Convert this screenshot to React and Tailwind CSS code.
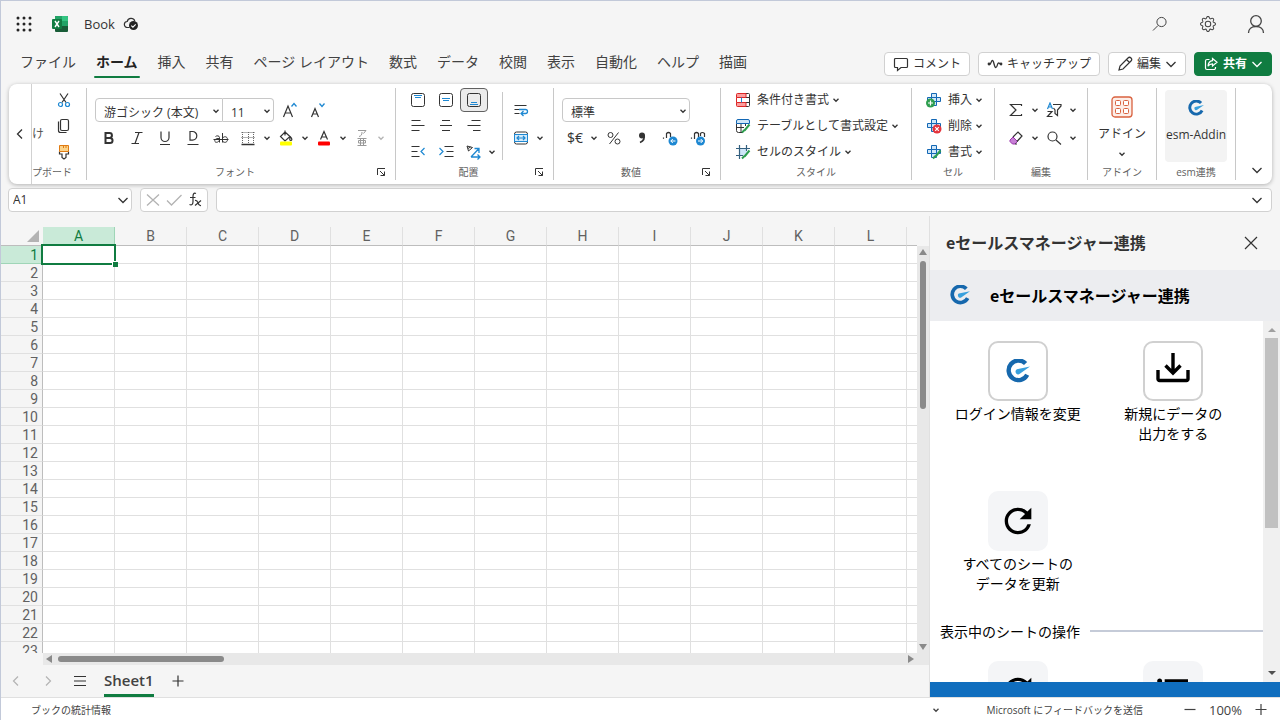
import { useState } from "react";
import { BsGear } from "react-icons/bs";
import { MdFormatListBulleted, MdRefresh } from "react-icons/md";

const TABS = [
  "ファイル",
  "ホーム",
  "挿入",
  "共有",
  "ページ レイアウト",
  "数式",
  "データ",
  "校閲",
  "表示",
  "自動化",
  "ヘルプ",
  "描画",
];
const COLUMNS = [..."ABCDEFGHIJKL", ""];
const ROWS = Array.from({ length: 23 }, (_, i) => i + 1);

function Icon({ size = 16, className = "", children }) {
  return (
    <svg
      width={size}
      height={size}
      viewBox={`0 0 ${size} ${size}`}
      fill="none"
      stroke="currentColor"
      strokeWidth="1"
      className={`shrink-0 ${className}`}
      aria-hidden="true"
    >
      {children}
    </svg>
  );
}

const Chevron = ({ className = "" }) => (
  <Icon size={8} className={className}>
    <path d="M1.5 2.8L4 5.3l2.5-2.5" strokeWidth="1.3" />
  </Icon>
);

const BigChevron = ({ className = "" }) => (
  <Icon size={12} className={className}>
    <path d="M1.5 4L6 8.5 10.5 4" strokeWidth="1.3" />
  </Icon>
);

function EsmLogo({ size = 24 }) {
  return (
    <svg width={size} height={size} viewBox="0 0 24 24" aria-hidden="true">
      <path
        d="M19.6 4.6A9.8 9.8 0 1 0 21.2 15.8"
        fill="none"
        stroke="#1668ad"
        strokeWidth="4.4"
      />
      <path
        d="M24 7.6L12 10a2.6 2.6 0 0 0-2.4 3.2 2.6 2.6 0 0 0 4.2 1.6z"
        fill="#38a0dd"
      />
    </svg>
  );
}

function ExcelLogo() {
  return (
    <svg width="16" height="16" viewBox="0 0 16 16" aria-hidden="true">
      <rect x="3" width="13" height="16" rx="1" fill="#185c37" />
      <path d="M3 1a1 1 0 0 1 1-1h6v5H3z" fill="#21a366" />
      <path d="M10 0h5a1 1 0 0 1 1 1v4h-6z" fill="#33c481" />
      <path d="M3 5h7v5H3z" fill="#107c41" />
      <path d="M10 5h6v5h-6z" fill="#21a366" />
      <rect y="3" width="10" height="10" rx="1" fill="#107c41" />
      <path d="M3 5l4 6M7 5l-4 6" stroke="#fff" strokeWidth="1.4" />
    </svg>
  );
}

function Tool({ label, active, children }) {
  return (
    <button
      aria-label={label}
      className={`flex h-6 w-7 items-center justify-center rounded ${active ? "border border-[#616161] bg-[#ebebeb]" : ""}`}
    >
      {children}
    </button>
  );
}

function SplitTool({ label, muted, children }) {
  return (
    <button
      aria-label={label}
      className={`flex h-6 items-center ${muted ? "text-[#b3b3b3]" : ""}`}
    >
      <span className="flex w-[26px] justify-center">{children}</span>
      <span className="flex w-3 justify-center">
        <Chevron />
      </span>
    </button>
  );
}

function TextTool({ label, children }) {
  return (
    <button className="flex h-6 items-center gap-1.5 whitespace-nowrap text-xs">
      {children}
      <span className="flex items-center gap-[3px]">
        {label}
        <Chevron />
      </span>
    </button>
  );
}

function Group({ label, launcher, width, children }) {
  return (
    <section
      className={`flex shrink-0 flex-col border-r border-[#c8c8c8] ${width}`}
    >
      <div className="flex-1">{children}</div>
      <div className="flex h-4 items-center text-[10px] leading-4 text-[#616161]">
        <span
          className={`flex-1 whitespace-nowrap text-center ${launcher ? "pl-2" : ""}`}
        >
          {label}
        </span>
        {launcher && (
          <button aria-label={`${label}の設定`} className="mr-2 text-[#333]">
            <Icon size={12}>
              <path d="M2.5 9V2.5H10M5 5l4.5 4.5M9.5 5.5v4h-4" />
            </Icon>
          </button>
        )}
      </div>
    </section>
  );
}

function Select({ label, value, className }) {
  return (
    <div className={`relative h-6 border border-[#c8c8c8] ${className}`}>
      <select
        aria-label={label}
        className="h-full w-full appearance-none pl-2 text-xs outline-none"
      >
        <option>{value}</option>
      </select>
      <Chevron className="pointer-events-none absolute right-0.5 top-2" />
    </div>
  );
}

function CellGlyph() {
  return (
    <path
      d="M5.5 1.5h5v4h4v4h-4v4h-5v-4h-4v-4h4zM5.5 5.5h5v4h-5z"
      stroke="#1267b4"
      fill="#cfe6f8"
    />
  );
}

function TopBar() {
  return (
    <header className="flex h-[47px] shrink-0 items-center pb-0.5 pl-3.5">
      <button aria-label="アプリ起動ツール" className="mr-[19px]">
        <Icon size={18}>
          {[3, 9, 15].map((y) =>
            [3, 9, 15].map((x) => (
              <circle
                key={`${x}-${y}`}
                cx={x}
                cy={y}
                r="1.5"
                fill="#242424"
                stroke="none"
              />
            )),
          )}
        </Icon>
      </button>
      <ExcelLogo />
      <span className="ml-4 text-[13px] leading-5">Book</span>
      <Icon className="ml-2">
        <path d="M6.5 11.5h-2a3 3 0 0 1-.3-6 4 4 0 0 1 7.6-.6" strokeWidth="1.2" />
        <circle cx="10.5" cy="9.5" r="4.5" fill="#242424" stroke="none" />
        <path d="M8.3 9.6l1.6 1.6 2.8-2.9" stroke="#fff" strokeWidth="1.1" />
      </Icon>
      <div className="ml-auto flex items-center text-[#444]">
        <button aria-label="検索" className="flex w-12 justify-center">
          <Icon>
            <circle cx="9.5" cy="6" r="4.6" />
            <path d="M6 9.5L1 14.5" />
          </Icon>
        </button>
        <button aria-label="設定" className="flex w-12 justify-center">
          <BsGear size={16} />
        </button>
        <button aria-label="アカウント" className="flex w-12 justify-center">
          <Icon size={18}>
            <circle cx="9" cy="6" r="5.3" strokeWidth="1.3" />
            <path d="M1.5 18c0-4 3-6.5 7.5-6.5s7.5 2.5 7.5 6.5" strokeWidth="1.3" />
          </Icon>
        </button>
      </div>
    </header>
  );
}

function TabRow() {
  const [tab, setTab] = useState("ホーム");
  const action =
    "flex h-6 items-center rounded border border-[#d1d1d1] bg-white px-2 gap-1 whitespace-nowrap";
  return (
    <div className="flex h-9 shrink-0 items-center justify-between pb-1 pl-[19px] pr-2">
      <nav className="flex gap-5">
        {TABS.map((name) => (
          <button
            key={name}
            onClick={() => setTab(name)}
            className={`relative h-7 whitespace-nowrap pb-1 text-sm leading-5 ${name === tab ? "font-bold text-[#242424]" : "text-[#424242]"}`}
          >
            {name}
            {name === tab && (
              <span className="absolute -inset-x-0.5 bottom-0 h-0.5 rounded bg-[#107c41]" />
            )}
          </button>
        ))}
      </nav>
      <div className="flex gap-2 text-xs">
        <button className={action}>
          <Icon>
            <path
              d="M2.5 2.5h11a1 1 0 0 1 1 1v7a1 1 0 0 1-1 1H8l-3.5 3v-3h-2a1 1 0 0 1-1-1v-7a1 1 0 0 1 1-1z"
              strokeWidth="1.2"
            />
          </Icon>
          コメント
        </button>
        <button className={action}>
          <Icon>
            <path
              d="M2 8.5c2 .5 2-4 3.500-4S7 11.500 8.800 11.500 10 7 11.500 7s1 1.500 3 1.500"
              strokeWidth="1.3"
            />
            <circle cx="2" cy="8" r="1.4" fill="currentColor" stroke="none" />
            <circle cx="14" cy="8" r="1.4" fill="currentColor" stroke="none" />
          </Icon>
          キャッチアップ
        </button>
        <button className={action}>
          <Icon>
            <path
              d="M2 14l1-4 8-8a1.8 1.8 0 0 1 3 3l-8 8zM9.500 3.500l3 3"
              strokeWidth="1.2"
            />
          </Icon>
          編集
          <BigChevron />
        </button>
        <button className="flex h-6 items-center gap-1 whitespace-nowrap rounded border border-[#107c41] bg-[#107c41] px-2 font-bold text-white">
          <Icon>
            <path
              d="M6.5 3.500H4A1.500 1.500 0 0 0 2.500 5v7A1.500 1.500 0 0 0 4 13.500h7a1.500 1.500 0 0 0 1.500-1.500v-1"
              strokeWidth="1.2"
            />
            <path
              d="M9.500 2.500L14 6.300 9.500 10V7.800C7.500 7.800 6 8.600 5 10.200 5.300 7 7 5 9.500 4.700z"
              strokeWidth="1.2"
            />
          </Icon>
          共有
          <BigChevron />
        </button>
      </div>
    </div>
  );
}

function FontGroup() {
  return (
    <Group label="フォント" launcher width="w-[309px]">
      <div className="flex flex-col gap-1 px-2 pt-2.5">
        <div className="flex">
          <Select
            label="フォント名"
            value="游ゴシック (本文)"
            className="w-32 rounded-l"
          />
          <Select
            label="フォント サイズ"
            value="11"
            className="mr-0.5 w-[51px] rounded-r border-l-0"
          />
          <Tool label="フォント サイズの拡大">
            <Icon>
              <path d="M1.5 15L6 4l4.5 11M3 11h6" strokeWidth="1.2" />
              <path d="M9.5 4.5l2.5-3 2.5 3" stroke="#1e88d2" strokeWidth="1.3" />
            </Icon>
          </Tool>
          <Tool label="フォント サイズの縮小">
            <Icon>
              <path d="M1.5 15L5 6.5 8.5 15M2.8 12h4.4" strokeWidth="1.2" />
              <path d="M9.5 1.5l2.5 3 2.5-3" stroke="#1e88d2" strokeWidth="1.3" />
            </Icon>
          </Tool>
        </div>
        <div className="flex">
          <Tool label="太字">
            <Icon>
              <path
                d="M4.5 3h4a2.4 2.4 0 0 1 0 4.9h-4zM4.5 7.9H9a2.5 2.5 0 0 1 0 5.1H4.5z"
                strokeWidth="2"
              />
            </Icon>
          </Tool>
          <Tool label="斜体">
            <Icon>
              <path d="M6 2.5h7.5M2.5 13.5H10M10 2.5l-4 11" strokeWidth="1.2" />
            </Icon>
          </Tool>
          <Tool label="下線">
            <Icon>
              <path d="M4 1.5v6a4 4 0 0 0 8 0v-6M3 14.5h10" strokeWidth="1.2" />
            </Icon>
          </Tool>
          <Tool label="二重下線">
            <Icon>
              <path d="M5 1.5h2.5a4.3 4.3 0 0 1 0 8.6H5z" strokeWidth="1.2" />
              <path d="M2.5 14.5h11" />
            </Icon>
          </Tool>
          <Tool label="取り消し線">
            <Icon>
              <path d="M2.5 6.5c1-1 4-1 4 1v5M6.5 8.5c-6-.5-5.5 4-3 3.800 1.500 0 3-1.500 3-2.500M9.500 3v9.500M9.500 8.500c1-2.500 5-2.500 5 1s-4 3.500-5 1.500M.5 9.500h15" />
            </Icon>
          </Tool>
          <SplitTool label="罫線">
            <Icon>
              <path
                d="M1.5 2.5h13M1.5 7.5h13M2.5 2v11M8.5 2v11M13.5 2v11"
                strokeDasharray="1 1"
                stroke="#666"
              />
              <path d="M1.5 14.5h13" strokeWidth="1.5" />
            </Icon>
          </SplitTool>
          <SplitTool label="塗りつぶしの色">
            <Icon>
              <path
                d="M7 2l5 4.5-5 4.5-4.5-4.5zM7 .5v5M12.5 7c2 2 1.5 3.5.3 3.5s-1.500-1.500-.3-3.500z"
                strokeWidth="1.2"
              />
              <rect x="2" y="11.5" width="12" height="4" rx="1" fill="#ff0" stroke="none" />
            </Icon>
          </SplitTool>
          <SplitTool label="フォントの色">
            <Icon>
              <path d="M4.5 9.5l3.5-8 3.5 8M5.700 7h4.600" strokeWidth="1.2" />
              <rect x="2" y="11.5" width="12" height="4" rx="1" fill="#f00" stroke="none" />
            </Icon>
          </SplitTool>
          <SplitTool label="ふりがな" muted>
            <Icon>
              <path
                d="M4 .5h8L9.500 3.500M8 2c0 3-1 4-3 4.500M3.500 8.500h9M4.500 10.500h7v2.500h-7zM6.500 8.500v6.500M9.500 8.500v6.500M3.500 15.500h9"
                stroke="#999"
              />
            </Icon>
          </SplitTool>
        </div>
      </div>
    </Group>
  );
}

function AlignGroup() {
  return (
    <Group label="配置" launcher width="w-[158px]">
      <div className="flex pl-2">
        <div className="flex w-[98px] flex-col gap-0.5">
          <div className="flex">
            <Tool label="上揃え">
              <Icon>
                <rect x="1.5" y="1.5" width="13" height="13" rx="2" />
                <path d="M4 3.5h8M5 5.5h6" stroke="#1e88d2" />
              </Icon>
            </Tool>
            <Tool label="上下中央揃え">
              <Icon>
                <rect x="1.5" y="1.5" width="13" height="13" rx="2" />
                <path d="M4 6.5h8M5 8.5h6" stroke="#1e88d2" />
              </Icon>
            </Tool>
            <Tool label="下揃え" active>
              <Icon>
                <rect x="1.5" y="1.5" width="13" height="13" rx="2" />
                <path d="M5 10.5h6M4 12.5h8" stroke="#1e88d2" />
              </Icon>
            </Tool>
          </div>
          <div className="flex">
            <Tool label="左揃え">
              <Icon>
                <path d="M1.5 2.5h9M1.5 7.5h13M1.5 12.5h8" strokeWidth="1.2" />
              </Icon>
            </Tool>
            <Tool label="中央揃え">
              <Icon>
                <path d="M4 2.5h8M2 7.5h12M4 12.5h8" strokeWidth="1.2" />
              </Icon>
            </Tool>
            <Tool label="右揃え">
              <Icon>
                <path d="M5.5 2.5h9M1.5 7.5h13M7 12.5h7.5" strokeWidth="1.2" />
              </Icon>
            </Tool>
          </div>
          <div className="flex">
            <Tool label="インデントを減らす">
              <Icon>
                <path d="M1.5 2.5h8M1.5 7.5h6M1.5 12.5h8" strokeWidth="1.2" />
                <path d="M14.5 4L11 7.5l3.5 3.5" stroke="#1e88d2" strokeWidth="1.2" />
              </Icon>
            </Tool>
            <Tool label="インデントを増やす">
              <Icon>
                <path d="M6.5 2.5h9M8.5 7.5h7M6.5 12.5h9" strokeWidth="1.2" />
                <path d="M1.5 4L5 7.5 1.5 11" stroke="#1e88d2" strokeWidth="1.2" />
              </Icon>
            </Tool>
            <SplitTool label="方向">
              <Icon>
                <path d="M2 2l5.5 1.500L3.500 7zM5.500 3L3 4.500" />
                <path
                  d="M6 13l8-8.500M9.500 4.500H14V9M6 13h9M12.500 10.500L15 13l-2.500 2.500"
                  stroke="#1e88d2"
                  strokeWidth="1.3"
                />
              </Icon>
            </SplitTool>
          </div>
        </div>
        <div className="mt-1 flex h-[68px] flex-col gap-1 border-l border-[#c8c8c8] pl-[5px] pt-1.5">
          <button
            aria-label="折り返して全体を表示"
            className="flex h-6 w-[26px] items-center justify-center"
          >
            <Icon>
              <path d="M1.5 3.5h12M1.5 11.5h5M1.5 7.5H6" strokeWidth="1.2" />
              <path
                d="M6 7.5h6.5a2 2 0 0 1 0 4H8.5M10.5 9L8 11.5l2.5 2.5"
                stroke="#1e88d2"
                strokeWidth="1.3"
              />
            </Icon>
          </button>
          <SplitTool label="セルを結合して中央揃え">
            <Icon>
              <rect x="1.5" y="2" width="13" height="12" rx="2" />
              <rect x="1.5" y="4.5" width="13" height="7" fill="#d5eaf9" stroke="#1e88d2" />
              <path
                d="M4 8h8M6 6L4 8l2 2M10 6l2 2-2 2"
                stroke="#1e88d2"
                strokeWidth="1.2"
              />
            </Icon>
          </SplitTool>
        </div>
      </div>
    </Group>
  );
}

function NumberGroup() {
  return (
    <Group label="数値" launcher width="w-[167px]">
      <div className="flex flex-col gap-1 px-2 pt-2.5">
        <Select label="表示形式" value="標準" className="w-32 rounded" />
        <div className="flex">
          <SplitTool label="通貨表示形式">
            <span className="text-sm">$€</span>
          </SplitTool>
          <Tool label="パーセント スタイル">
            <Icon>
              <circle cx="4.5" cy="5" r="2.5" />
              <circle cx="11.5" cy="11.5" r="2.5" />
              <path d="M12.5 2.5l-9 11.5" />
            </Icon>
          </Tool>
          <Tool label="桁区切りスタイル">
            <Icon>
              <circle cx="8" cy="5.5" r="3" fill="currentColor" stroke="none" />
              <path d="M10 5c.8 3-.5 6-4 7.5" strokeWidth="1.7" />
            </Icon>
          </Tool>
          <Tool label="小数点以下の表示桁数を増やす">
            <Icon>
              <path d="M1.5 7.500v1.200M4.500 8V3.500q2-2 4 0V7" strokeWidth="1.2" />
              <circle cx="11" cy="11" r="4.5" fill="#1e88d2" stroke="none" />
              <path d="M13.5 11H8.8M10.8 9l-2 2 2 2" stroke="#fff" />
            </Icon>
          </Tool>
          <Tool label="小数点以下の表示桁数を減らす">
            <Icon>
              <path
                d="M1.5 7.500v1.200M4.500 9V3.500q2-2 4 0V7M10.500 6V3.500q1.700-2 4 0V7"
                strokeWidth="1.2"
              />
              <circle cx="10.5" cy="11" r="4.5" fill="#1e88d2" stroke="none" />
              <path d="M8 11h4.700M10.700 9l2 2-2 2" stroke="#fff" />
            </Icon>
          </Tool>
        </div>
      </div>
    </Group>
  );
}

function StyleGroup() {
  return (
    <Group label="スタイル" width="w-[191px]">
      <div className="flex flex-col items-start gap-0.5 pl-3.5">
        <TextTool label="条件付き書式">
          <Icon>
            <path d="M6 5.5h8.5v5H6M11 1.500h2.500a1 1 0 0 1 1 1v11a1 1 0 0 1-1 1H11" />
            <path
              d="M2.5 1.5H11v4H1.5v-3a1 1 0 0 1 1-1zM1.5 10.5H11v4H2.5a1 1 0 0 1-1-1z"
              fill="#fb9c9c"
              stroke="#dc2626"
            />
            <path d="M1.5 5.5v5" stroke="#dc2626" />
            <path d="M6.5 5.5v5" stroke="#1e88d2" />
          </Icon>
        </TextTool>
        <TextTool label="テーブルとして書式設定">
          <Icon>
            <path d="M1.5 5.500v7a2 2 0 0 0 2 2h2M1.500 9.500H9M6 5.500v9M10.500 5.500V8M5 14.500h3" />
            <path
              d="M3 1.500h10A1.500 1.500 0 0 1 14.500 3v2.500h-13V3A1.500 1.500 0 0 1 3 1.500z"
              fill="#cfe6f8"
              stroke="#1267b4"
            />
            <path d="M14.500 6.500l-5 6M9.500 12L7 14.500" stroke="#2e9e4f" strokeWidth="2" />
          </Icon>
        </TextTool>
        <TextTool label="セルのスタイル">
          <Icon>
            <path d="M5 4.5h7v7H5z" fill="#cfe6f8" stroke="none" />
            <path
              d="M1 4.5h14M1 11.5h7M4.5 1v14M11.5 1v6"
              stroke="#34607f"
              strokeWidth="1.2"
            />
            <path d="M14.5 6.5l-5 6M9.5 12L7 14.5" stroke="#2e9e4f" strokeWidth="2" />
          </Icon>
        </TextTool>
      </div>
    </Group>
  );
}

function CellGroup() {
  return (
    <Group label="セル" width="w-[83px]">
      <div className="flex flex-col items-start gap-0.5 pl-3.5">
        <TextTool label="挿入">
          <Icon>
            <CellGlyph />
            <circle cx="4.5" cy="11" r="4.5" fill="#2e9e4f" stroke="none" />
            <path d="M4.5 8.5v5M2 11h5" stroke="#fff" strokeWidth="1.2" />
          </Icon>
        </TextTool>
        <TextTool label="削除">
          <Icon>
            <CellGlyph />
            <circle cx="11" cy="11" r="4.5" fill="#e5343d" stroke="none" />
            <path
              d="M9.2 9.2l3.6 3.6M12.8 9.2l-3.6 3.6"
              stroke="#fff"
              strokeWidth="1.2"
            />
          </Icon>
        </TextTool>
        <TextTool label="書式">
          <Icon>
            <CellGlyph />
            <path d="M14.5 6.5l-5 6M9.5 12L7 14.5" stroke="#2e9e4f" strokeWidth="2" />
          </Icon>
        </TextTool>
      </div>
    </Group>
  );
}

function EditGroup() {
  return (
    <Group label="編集" width="w-[93px]">
      <div className="flex flex-col gap-1 px-2 pt-2.5">
        <div className="flex">
          <SplitTool label="合計">
            <Icon>
              <path d="M13.5 4V2.5h-11L8 8l-5.500 5.500h11V12" strokeWidth="1.2" />
            </Icon>
          </SplitTool>
          <SplitTool label="並べ替えとフィルター">
            <Icon>
              <path d="M1.5 7L4 1l2.5 6M2.300 5h3.400" stroke="#1e88d2" strokeWidth="1.2" />
              <path
                d="M1.5 9.5H6l-4.500 5h5M7 2.500h8V4l-3.500 4v5.500L9 11.500V8L7.500 6"
                strokeWidth="1.2"
              />
            </Icon>
          </SplitTool>
        </div>
        <div className="flex">
          <SplitTool label="クリア">
            <Icon>
              <path
                d="M2 10l3-3 4.500 4.500L7 14H4.500L2 11.500z"
                fill="#c77fd6"
                stroke="#9b35ad"
              />
              <path d="M5 7l5-5 4 4-5 5.500M7 14h2" strokeWidth="1.2" />
            </Icon>
          </SplitTool>
          <SplitTool label="検索と選択">
            <Icon>
              <circle cx="6.5" cy="6.5" r="4.5" strokeWidth="1.2" />
              <path d="M10 10l5 4.5" strokeWidth="1.2" />
            </Icon>
          </SplitTool>
        </div>
      </div>
    </Group>
  );
}

function Ribbon() {
  return (
    <div className="ml-2 mr-2 flex h-[100px] shrink-0 rounded-lg bg-white shadow-[0_1px_4px_rgba(0,0,0,0.28)]">
      <button
        aria-label="左へスクロール"
        className="flex w-[23px] shrink-0 items-center justify-center rounded-l-lg border-r border-[#d1d1d1]"
      >
        <Icon size={12}>
          <path d="M8 1.5L3.5 6 8 10.5" strokeWidth="1.3" />
        </Icon>
      </button>
      <div className="flex min-w-0 flex-1 py-1">
        <section className="flex w-[55px] shrink-0 flex-col border-r border-[#c8c8c8]">
          <div className="flex flex-1 items-center justify-between pr-2">
            <button className="pt-4 text-xs text-[#555]">け</button>
            <div className="flex flex-col gap-0.5">
              <Tool label="切り取り">
                <Icon>
                  <path d="M4 1.5l6 9M12 1.5l-6 9" strokeWidth="1.2" />
                  <circle cx="4.5" cy="12.5" r="2" stroke="#1e88d2" strokeWidth="1.2" />
                  <circle cx="11.5" cy="12.5" r="2" stroke="#1e88d2" strokeWidth="1.2" />
                </Icon>
              </Tool>
              <Tool label="コピー">
                <Icon>
                  <rect x="4.5" y="1.5" width="8" height="11" rx="1.5" strokeWidth="1.2" />
                  <path d="M2.5 3.5v9a2 2 0 0 0 2 2h6" strokeWidth="1.2" />
                </Icon>
              </Tool>
              <Tool label="書式のコピー">
                <Icon>
                  <path d="M3.5 7.500V10H6v3.500l2 1.500 2-1.500V10h2.500V7.500" strokeWidth="1.2" />
                  <path
                    d="M3.5 1.5h9v6h-9zM7.500 1.500V4M10 1.500V4"
                    fill="#fbd38a"
                    stroke="#e07b12"
                  />
                </Icon>
              </Tool>
            </div>
          </div>
          <div className="h-4 text-[10px] leading-4 text-[#616161]">プボード</div>
        </section>
        <FontGroup />
        <AlignGroup />
        <NumberGroup />
        <StyleGroup />
        <CellGroup />
        <EditGroup />
        <Group label="アドイン" width="w-[69px]">
          <button className="flex w-full flex-col items-center pt-2 text-xs">
            <Icon size={22} className="text-[#d9623f]">
              <rect
                x="1"
                y="1"
                width="20"
                height="20"
                rx="3"
                fill="#fdeee8"
                strokeWidth="1.3"
              />
              <rect x="4.5" y="4.5" width="5" height="5" rx="1" fill="#fff" />
              <rect x="12.5" y="4.5" width="5" height="5" rx="1" fill="#fff" />
              <rect x="4.5" y="12.5" width="5" height="5" rx="1" fill="#fff" />
              <rect x="12.5" y="12.5" width="5" height="5" rx="1" fill="#fff" />
            </Icon>
            <span className="mt-2 leading-4">アドイン</span>
            <Chevron className="mt-2" />
          </button>
        </Group>
        <Group label="esm連携" width="w-[79px]">
          <button className="mx-auto mt-0.5 flex h-[72px] w-[62px] flex-col items-center rounded bg-[#f3f3f3] pt-2.5 text-xs">
            <EsmLogo size={16} />
            <span className="mt-[11px] leading-4">esm-Addin</span>
          </button>
        </Group>
        <button
          aria-label="リボンの表示オプション"
          className="mb-1 ml-auto mr-[9px] self-end"
        >
          <BigChevron />
        </button>
      </div>
    </div>
  );
}

function FormulaBar() {
  const box = "flex h-6 items-center rounded border border-[#d1d1d1] bg-white";
  return (
    <div className="my-1 ml-[7px] mr-2 flex shrink-0 gap-2">
      <div className={`${box} w-[124px] pr-0.5`}>
        <input
          aria-label="名前ボックス"
          defaultValue="A1"
          className="min-w-0 flex-1 pl-1 text-xs outline-none"
        />
        <BigChevron />
      </div>
      <div className={`${box} w-[68px] justify-around px-0.5 text-[#b3b3b3]`}>
        <button aria-label="キャンセル">
          <Icon>
            <path d="M2 2.5l12 11M14 2.5l-12 11" strokeWidth="1.3" />
          </Icon>
        </button>
        <button aria-label="入力">
          <Icon>
            <path d="M1 8.5L5.500 13l10-10" strokeWidth="1.3" />
          </Icon>
        </button>
        <button aria-label="関数の挿入" className="text-[#333]">
          <Icon>
            <path
              d="M9 1.5c-2.500-1-3 1-3 3v5c0 2.500-1 4-3.500 3M3 5.500h5.500"
              strokeWidth="1.2"
            />
            <path
              d="M8 8.5c2-.5 2.500 1 3 2.500s1 3 3 2.500M14 8.500l-6 5"
              strokeWidth="1.2"
            />
          </Icon>
        </button>
      </div>
      <div className={`${box} flex-1 pr-2`}>
        <input
          aria-label="数式バー"
          className="min-w-0 flex-1 px-2 text-xs outline-none"
        />
        <BigChevron />
      </div>
    </div>
  );
}

function Grid() {
  return (
    <div className="min-w-0 flex-1 overflow-hidden bg-white">
      <table className="w-[978px] table-fixed border-separate border-spacing-0 font-['Roboto','Noto_Sans_CJK_JP',sans-serif] text-sm leading-4 text-[#616161]">
        <colgroup>
          <col className="w-[42px]" />
          {COLUMNS.map((c) => (
            <col key={c} className="w-[72px]" />
          ))}
        </colgroup>
        <thead>
          <tr>
            <th className="h-[19px] border-b border-r border-[#bdbdbd] border-r-[#f5f5f5] bg-[#f5f5f5] p-0">
              <svg
                width="12"
                height="12"
                className="ml-auto mr-[3px]"
                aria-label="すべて選択"
              >
                <path d="M12 0v12H0z" fill="#b3b3b3" />
              </svg>
            </th>
            {COLUMNS.map((c) => (
              <th
                key={c}
                className={`border-b border-r border-[#bdbdbd] p-0 font-normal ${c === "A" ? "border-r-[#9fd5b7] bg-[#c9ead8] text-[#107c41]" : "border-r-[#e0e0e0] bg-[#f5f5f5]"}`}
              >
                {c}
              </th>
            ))}
          </tr>
        </thead>
        <tbody>
          {ROWS.map((r) => (
            <tr key={r}>
              <th
                className={`h-[18px] border-b border-r border-r-[#bdbdbd] p-0 pr-1 text-right font-normal ${r === 1 ? "border-b-[#9fd5b7] bg-[#c9ead8] text-[#107c41]" : "border-b-[#e0e0e0] bg-[#f5f5f5]"}`}
              >
                {r}
              </th>
              {COLUMNS.map((c) => (
                <td
                  key={c}
                  className="relative border-b border-r border-[#e0e0e0] p-0"
                >
                  {c === "A" && r === 1 && (
                    <span className="absolute -inset-0.5 z-10 border-2 border-[#107c41]">
                      <span className="absolute -bottom-1 -right-1 size-1.5 border-l border-t border-white bg-[#107c41]" />
                    </span>
                  )}
                </td>
              ))}
            </tr>
          ))}
        </tbody>
      </table>
    </div>
  );
}

function Sheet() {
  return (
    <main className="flex min-w-0 flex-1 flex-col pt-[11px]">
      <div className="flex min-h-0 flex-1">
        <Grid />
        <div className="mt-[19px] flex w-3 shrink-0 flex-col items-center bg-[#e8e8e8] py-0.5">
          <svg width="8" height="8" aria-hidden="true">
            <path d="M4 1l4 6H0z" fill="#8a8a8a" />
          </svg>
          <div className="mt-[5px] h-[148px] w-1.5 rounded-full bg-[#8a8a8a]" />
          <svg width="8" height="8" className="mt-auto" aria-hidden="true">
            <path d="M0 1h8L4 7z" fill="#8a8a8a" />
          </svg>
        </div>
      </div>
      <div className="ml-[42px] flex h-3 shrink-0 items-center bg-[#e8e8e8] pl-0.5 pr-3.5">
        <svg width="8" height="8" aria-hidden="true">
          <path d="M7 0v8L1 4z" fill="#8a8a8a" />
        </svg>
        <div className="ml-[5px] h-1.5 w-[166px] rounded-full bg-[#8a8a8a]" />
        <svg width="8" height="8" className="ml-auto" aria-hidden="true">
          <path d="M1 0v8l6-4z" fill="#8a8a8a" />
        </svg>
      </div>
      <div className="flex h-8 shrink-0 items-center gap-4 pl-[7px]">
        <button
          aria-label="前のシート"
          className="flex w-4 justify-center text-[#b3b3b3]"
        >
          <Icon size={12}>
            <path d="M8 1.5L3.5 6 8 10.5" strokeWidth="1.2" />
          </Icon>
        </button>
        <button
          aria-label="次のシート"
          className="flex w-4 justify-center text-[#b3b3b3]"
        >
          <Icon size={12}>
            <path d="M4 1.5L8.5 6 4 10.5" strokeWidth="1.2" />
          </Icon>
        </button>
        <button aria-label="すべてのシート">
          <Icon>
            <path d="M2 3.5h12M2 8h12M2 12.5h12" strokeWidth="1.2" />
          </Icon>
        </button>
        <button className="h-8 border-y-[3px] border-t-transparent border-b-[#107c41] pb-1 text-[15px] font-semibold leading-6 text-[#424242]">
          Sheet1
        </button>
        <button aria-label="新しいシート">
          <Icon>
            <path d="M2.5 8h11M8 2.5v11" strokeWidth="1.2" />
          </Icon>
        </button>
      </div>
    </main>
  );
}

function Tile({ lines = [], outlined, children }) {
  return (
    <button className="flex min-h-[130px] flex-col items-center text-sm leading-5 text-black">
      <span
        className={`mb-0.5 flex size-[60px] items-center justify-center rounded-[10px] ${outlined ? "border-2 border-[#d0d0d0] bg-white" : "bg-[#f4f5f7]"}`}
      >
        {children}
      </span>
      {lines.map((line) => (
        <span key={line}>{line}</span>
      ))}
    </button>
  );
}

function AddinPanel() {
  return (
    <aside className="flex w-[351px] shrink-0 flex-col border-l border-[#e0e0e0] font-['Noto_Sans_CJK_JP',sans-serif]">
      <div className="flex h-[54px] shrink-0 items-center justify-between pb-0.5 pl-4 pr-5">
        <h2 className="text-base font-bold leading-6 text-[#333]">
          eセールスマネージャー連携
        </h2>
        <button aria-label="閉じる">
          <Icon size={18}>
            <path d="M3 4l12 12M15 4L3 16" strokeWidth="1.2" />
          </Icon>
        </button>
      </div>
      <div className="flex h-[51px] shrink-0 items-center gap-5 bg-[#ecedf0] pb-0.5 pl-5 text-black">
        <EsmLogo size={20} />
        <h3 className="text-base font-bold leading-6">
          eセールスマネージャー連携
        </h3>
      </div>
      <div className="flex min-h-0 flex-1 bg-white">
        <div className="flex-1 overflow-hidden pt-5">
          <div className="grid grid-cols-2 gap-y-5 pl-2.5 pr-3">
            <Tile outlined lines={["ログイン情報を変更"]}>
              <EsmLogo size={24} />
            </Tile>
            <Tile outlined lines={["新規にデータの", "出力をする"]}>
              <Icon size={40}>
                <path
                  d="M5 19v9a1.5 1.5 0 0 0 1.5 1.5h27A1.5 1.5 0 0 0 35 28v-9M20 2v19M12.5 14.5L20 22l7.5-7.5"
                  strokeWidth="3.4"
                />
              </Icon>
            </Tile>
            <Tile lines={["すべてのシートの", "データを更新"]}>
              <MdRefresh size={40} />
            </Tile>
          </div>
          <div className="flex items-center gap-2.5 pl-2.5 text-sm leading-5 text-black">
            表示中のシートの操作
            <span className="h-0.5 flex-1 bg-[#c5cbd8]" />
          </div>
          <div className="mt-5 grid grid-cols-2 pl-2.5 pr-3">
            <Tile>
              <MdRefresh size={40} />
            </Tile>
            <Tile>
              <MdFormatListBulleted size={40} />
            </Tile>
          </div>
        </div>
        <div className="flex w-[17px] shrink-0 flex-col items-center bg-[#f0f0f0] py-[5px]">
          <svg width="8" height="8" aria-hidden="true">
            <path d="M4 2l4 4H0z" fill="#a0a0a0" />
          </svg>
          <div className="mt-1 h-[190px] w-[13px] bg-[#c1c1c1]" />
          <svg width="8" height="8" className="mt-auto" aria-hidden="true">
            <path d="M0 2h8L4 6z" fill="#505050" />
          </svg>
        </div>
      </div>
      <div className="h-[15px] shrink-0 bg-[#106ebe]" />
    </aside>
  );
}

function StatusBar() {
  return (
    <footer className="flex h-[23px] shrink-0 items-center border-t border-[#e0e0e0] bg-white pl-[30px] pr-3 pt-0.5 text-[10px] leading-4 text-[#424242]">
      <button>ブックの統計情報</button>
      <Chevron className="ml-auto mr-[46px]" />
      <button>Microsoft にフィードバックを送信</button>
      <button aria-label="縮小" className="ml-10">
        <Icon size={14}>
          <path d="M1.5 6.5h11" strokeWidth="1.2" />
        </Icon>
      </button>
      <span className="mx-3 text-[13px]">100%</span>
      <button aria-label="拡大">
        <Icon size={14}>
          <path d="M1.5 6.5h11M7 1v11" strokeWidth="1.2" />
        </Icon>
      </button>
    </footer>
  );
}

export default function App() {
  return (
    <div className="flex h-screen flex-col overflow-hidden border-l border-t border-[#c2c9d9] bg-[#f5f5f5] font-['Open_Sans','Noto_Sans_CJK_JP',sans-serif] text-[#333]">
      <TopBar />
      <TabRow />
      <Ribbon />
      <FormulaBar />
      <div className="flex min-h-0 flex-1">
        <Sheet />
        <AddinPanel />
      </div>
      <StatusBar />
    </div>
  );
}
